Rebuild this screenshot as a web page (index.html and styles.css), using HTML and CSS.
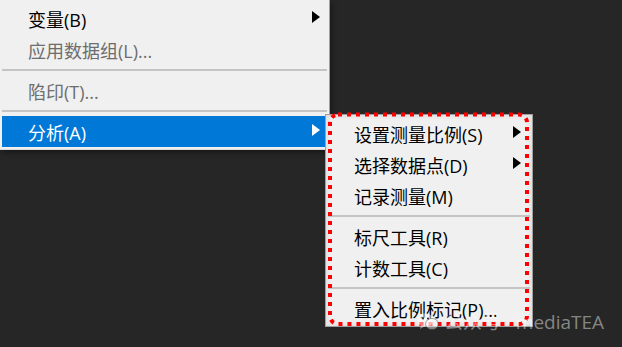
FILE: index.html
```html
<!DOCTYPE html>
<html>
  <head>
    <title>分析菜单</title>
    <link rel="stylesheet" href="styles.css">
  </head>
  <body>
    <div class="menu main-menu">
      <div class="item">
        <span class="label">变量(B)</span>
        <span class="arrow"></span>
      </div>
      <div class="item disabled">
        <span class="label">应用数据组(L)...</span>
      </div>
      <div class="separator"></div>
      <div class="item disabled">
        <span class="label">陷印(T)...</span>
      </div>
      <div class="separator"></div>
      <div class="item active">
        <span class="label">分析(A)</span>
        <span class="arrow"></span>
      </div>
    </div>

    <div class="menu sub-menu">
      <div class="item">
        <span class="label">设置测量比例(S)</span>
        <span class="arrow"></span>
      </div>
      <div class="item">
        <span class="label">选择数据点(D)</span>
        <span class="arrow"></span>
      </div>
      <div class="item">
        <span class="label">记录测量(M)</span>
      </div>
      <div class="separator"></div>
      <div class="item">
        <span class="label">标尺工具(R)</span>
      </div>
      <div class="item">
        <span class="label">计数工具(C)</span>
      </div>
      <div class="separator"></div>
      <div class="item">
        <span class="label">置入比例标记(P)...</span>
      </div>
    </div>

    <svg class="highlight" width="220" height="226" viewBox="0 0 220 226">
      <rect x="5" y="4.5" width="197" height="209.5" rx="8" ry="8"
        fill="none" stroke="#ff0000" stroke-width="4" stroke-dasharray="4 5" />
    </svg>

    <div class="watermark">
      <svg class="wm-icon" width="22" height="20" viewBox="0 0 22 20">
        <ellipse cx="8.5" cy="8" rx="8" ry="6.8" fill="currentColor" />
        <path d="M4 13 L3 17 L8 14 Z" fill="currentColor" />
        <ellipse cx="15" cy="12" rx="6.5" ry="5.5" fill="currentColor" stroke="#262626" stroke-opacity="0.4" stroke-width="1" />
        <circle cx="6" cy="6.5" r="1" fill="#262626" />
        <circle cx="11" cy="6.5" r="1" fill="#262626" />
      </svg>
      <span>公众号 · mediaTEA</span>
    </div>
  </body>
</html>
```

FILE: styles.css
```css
body {
  margin: 0;
  background: #262626;
  font-family: "Open Sans", "Noto Sans CJK SC", sans-serif;
  font-size: 18px;
  width: 622px;
  height: 347px;
  position: relative;
  overflow: hidden;
}

.menu {
  background: #f0f0f0;
  box-sizing: border-box;
  display: flex;
  flex-direction: column;
}

.main-menu {
  width: 330px;
  padding: 3px 2px 2px 2px;
  border-right: 1px solid #a0a0a0;
  border-bottom: 1px solid #d8d8d8;
  box-shadow: 2px 3px 5px rgba(0, 0, 0, 0.35);
}

.sub-menu {
  position: absolute;
  left: 325px;
  top: 114px;
  width: 208px;
  padding: 3px 2px 2px 2px;
  border: 1px solid #a0a0a0;
  box-shadow: inset 0 0 6px rgba(0, 0, 0, 0.12);
}

.item {
  height: 31px;
  display: flex;
  align-items: center;
  justify-content: space-between;
  padding-left: 26px;
  color: #000;
  line-height: 1;
}

.item .label {
  margin-top: 3px;
}

.item.disabled {
  color: #6d6d6d;
}

.item.active {
  background: #0078d7;
  color: #fff;
}

.arrow {
  width: 0;
  height: 0;
  border-top: 6.5px solid transparent;
  border-bottom: 6.5px solid transparent;
  border-left: 8px solid #000;
  margin-right: 7px;
  margin-bottom: 4px;
}

.sub-menu .arrow {
  margin-right: 9px;
}

.item.active .arrow {
  border-left-color: #fff;
}

.separator {
  height: 2px;
  margin: 4px 0;
  background: #c4c4c4;
}

.highlight {
  position: absolute;
  left: 325px;
  top: 110px;
}

.watermark {
  position: absolute;
  left: 417px;
  top: 312px;
  display: flex;
  align-items: center;
  gap: 5px;
  color: rgba(255, 255, 255, 0.45);
  font-size: 19px;
  line-height: 1;
}

.wm-icon {
  color: rgba(255, 255, 255, 0.45);
}
```
